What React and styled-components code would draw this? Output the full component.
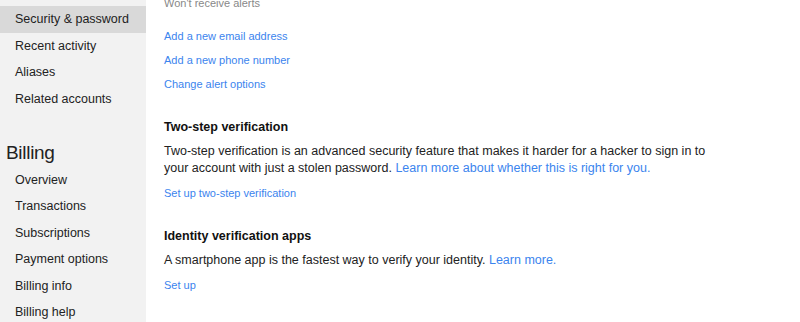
import React from "react";
import styled, { createGlobalStyle } from "styled-components";

const GlobalStyles = createGlobalStyle`
  html, body {
    margin: 0;
    padding: 0;
    background: #ffffff;
  }
  body {
    font-family: "Liberation Sans", Arial, Helvetica, sans-serif;
    color: #222222;
    -webkit-font-smoothing: antialiased;
  }
`;

const accountLinks = ["Security & password", "Recent activity", "Aliases", "Related accounts"];
const billingLinks = ["Overview", "Transactions", "Subscriptions", "Payment options", "Billing info", "Billing help"];

const App = () => {
  return (
    <>
      <GlobalStyles />
      <Page>
        <Sidebar>
          <NavList>
            {accountLinks.map((label) => (
              <NavItem key={label} $active={label === "Security & password"}>
                {label}
              </NavItem>
            ))}
          </NavList>
          <NavHeading>Billing</NavHeading>
          <NavList>
            {billingLinks.map((label) => (
              <NavItem key={label}>{label}</NavItem>
            ))}
          </NavList>
        </Sidebar>

        <Main>
          <Note>Won't receive alerts</Note>
          <LinkList>
            <SmallLink href="#">Add a new email address</SmallLink>
            <SmallLink href="#">Add a new phone number</SmallLink>
            <SmallLink href="#">Change alert options</SmallLink>
          </LinkList>

          <Section>
            <SectionTitle>Two-step verification</SectionTitle>
            <Text>
              Two-step verification is an advanced security feature that makes it harder for a hacker to sign in to
              your account with just a stolen password.{" "}
              <InlineLink href="#">Learn more about whether this is right for you.</InlineLink>
            </Text>
            <SmallLink href="#">Set up two-step verification</SmallLink>
          </Section>

          <Section>
            <SectionTitle>Identity verification apps</SectionTitle>
            <Text>
              A smartphone app is the fastest way to verify your identity. <InlineLink href="#">Learn more.</InlineLink>
            </Text>
            <SmallLink href="#">Set up</SmallLink>
          </Section>
        </Main>
      </Page>
    </>
  );
};

export default App;

const Page = styled.div`
  display: flex;
  width: 800px;
  height: 322px;
  overflow: hidden;
`;

const Sidebar = styled.nav`
  flex: 0 0 146px;
  background: #f2f2f2;
  padding-top: 6px;
  box-sizing: border-box;
`;

const NavList = styled.div`
  display: flex;
  flex-direction: column;
`;

const NavItem = styled.a`
  display: block;
  height: 26.5px;
  line-height: 27px;
  padding-left: 15px;
  font-size: 12.5px;
  color: #222222;
  white-space: nowrap;
  background: ${(props) => (props.$active ? "#d9d9d9" : "transparent")};
  cursor: pointer;
`;

const NavHeading = styled.h2`
  margin: 26.5px 0 0;
  padding-left: 6px;
  height: 28px;
  line-height: 28px;
  font-size: 19px;
  font-weight: 400;
  letter-spacing: -0.3px;
  color: #222222;
`;

const Main = styled.main`
  flex: 1;
  padding-left: 18px;
  display: flex;
  flex-direction: column;
  align-items: flex-start;
`;

const Note = styled.div`
  margin-top: -5px;
  line-height: 16px;
  font-size: 11px;
  color: #888888;
`;

const LinkList = styled.div`
  display: flex;
  flex-direction: column;
  align-items: flex-start;
  margin-top: 13px;
`;

const SmallLink = styled.a`
  display: block;
  line-height: 24px;
  font-size: 11px;
  color: #3b84ee;
  text-decoration: none;
`;

const Section = styled.section`
  display: flex;
  flex-direction: column;
  align-items: flex-start;
  margin-top: 21px;

  ${SmallLink} {
    margin-top: 4.5px;
  }
`;

const SectionTitle = styled.h3`
  margin: 0;
  line-height: 20px;
  font-size: 12.5px;
  font-weight: 700;
  color: #111111;
`;

const Text = styled.p`
  margin: 5.5px 0 0;
  max-width: 565px;
  line-height: 17px;
  font-size: 12.5px;
  color: #222222;
`;

const InlineLink = styled.a`
  color: #3b84ee;
  text-decoration: none;
`;
